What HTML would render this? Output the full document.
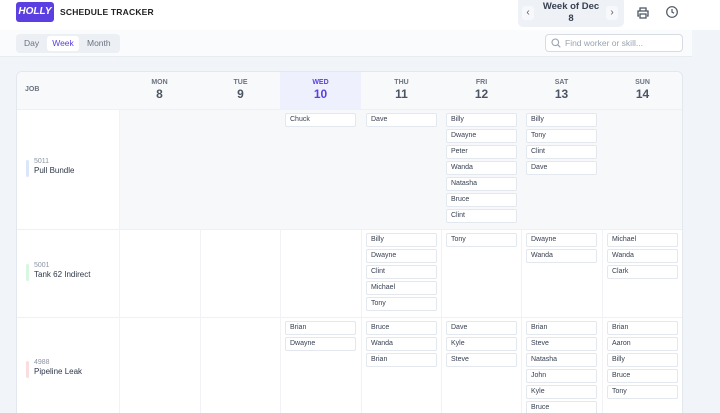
<!DOCTYPE html><html style="height:413px;overflow:hidden"><head><meta charset="utf-8"><style>
*{box-sizing:border-box;margin:0;padding:0}
html,body{width:720px;height:413px;overflow:hidden}
body{background:#f1f4f8;font-family:"Liberation Sans",sans-serif;position:relative;color:#374151}
.a{position:absolute}
.top{left:0;top:0;width:720px;height:30px;background:#fff}
.tool{left:0;top:30px;width:692px;height:27px;background:#fafbfc;border-bottom:1px solid #e8ecf1}
.logo{left:16px;top:2px;width:38px;height:20px;background:#5b3fe0;border-radius:3px;color:#fff;font-weight:bold;font-style:italic;font-size:10px;line-height:20px;text-align:center}
.title{left:60px;top:7px;font-size:8.5px;font-weight:bold;color:#222;letter-spacing:.2px}
.week{left:518px;top:0;width:106px;height:27px;background:#eef1f6;border-radius:0 0 5px 5px}
.seg{left:16px;top:34px;width:104px;height:19px;background:#eceff4;border-radius:4px}
.card{left:16px;top:71px;width:667px;height:342px;background:#fff;border:1px solid #e3e7ee;border-bottom:none;border-radius:6px 6px 0 0;overflow:hidden}
.hd{font-size:7px;font-weight:bold;color:#6b7280;text-align:center}
.num{font-size:12px;font-weight:bold;color:#4b5563;text-align:center;margin-top:1px}
.chip{position:absolute;width:71px;height:14px;background:#fff;border:1px solid #e3e7ee;border-radius:2px;font-size:7px;line-height:12px;padding-left:4px;color:#374151}
.vl{position:absolute;width:1px;background:#f0f2f5}
.hl{position:absolute;height:1px;background:#eef0f4;left:0;width:667px}
.job{font-size:7px;color:#8a94a3}
.jn{font-size:8px;color:#2d3748;margin-top:1px}
.bar{position:absolute;width:3px;height:17px;border-radius:2px}
</style></head><body>
<div class="a top"></div>
<div class="a logo">HOLLY</div>
<div class="a title">SCHEDULE TRACKER</div>
<div class="a week"></div>
<div class="a" style="left:522px;top:6px;width:12px;height:14px;background:#f7f8fb;border-radius:3px;font-size:10px;color:#555;text-align:center;line-height:13px">‹</div>
<div class="a" style="left:606px;top:6px;width:12px;height:14px;background:#f7f8fb;border-radius:3px;font-size:10px;color:#555;text-align:center;line-height:13px">›</div>
<div class="a" style="left:536px;top:1px;width:70px;text-align:center;font-size:9.5px;font-weight:bold;color:#374151;line-height:12px">Week of Dec<br>8</div>
<svg class="a" style="left:636px;top:6px" width="14" height="14" viewBox="0 0 14 14" fill="none" stroke="#4b5563" stroke-width="1.3"><path d="M4 5V2h6v3M3 10H2V5h10v5h-1M4 8h6v4H4z"/></svg>
<svg class="a" style="left:665px;top:5px" width="14" height="14" viewBox="0 0 14 14" fill="none" stroke="#4b5563" stroke-width="1.2"><circle cx="7" cy="7" r="5.3"/><path d="M7 4v3l2 1.3"/></svg>
<div class="a tool"></div>
<div class="a seg"></div>
<div class="a" style="left:24px;top:38px;font-size:8.5px;color:#6b7280">Day</div>
<div class="a" style="left:47px;top:36px;width:32px;height:15px;background:#fff;border-radius:3px;font-size:8.5px;color:#5b3fe0;text-align:center;line-height:15px">Week</div>
<div class="a" style="left:87px;top:38px;font-size:8.5px;color:#6b7280">Month</div>
<div class="a" style="left:545px;top:34px;width:138px;height:18px;background:#fff;border:1px solid #d6dbe4;border-radius:4px"></div>
<svg class="a" style="left:551px;top:38px" width="10" height="10" viewBox="0 0 10 10" fill="none" stroke="#9aa3b0" stroke-width="1.1"><circle cx="4.3" cy="4.3" r="3.3"/><path d="M6.8 6.8L9.3 9.3"/></svg>
<div class="a" style="left:565px;top:38px;font-size:8.5px;color:#9aa3b0">Find worker or skill...</div>

<div class="a card">
<div class="a" style="left:0;top:0;width:667px;height:37px;background:#f8f9fb"></div>
<div class="a" style="left:263px;top:0;width:81px;height:37px;background:#eef0fd"></div>
<div class="a" style="left:102px;top:37px;width:565px;height:120px;background:#f7f8fa"></div>
<div class="hl" style="top:37px"></div><div class="hl" style="top:157px"></div><div class="hl" style="top:245px"></div>
<div class="vl" style="left:102px;top:37px;height:305px"></div>
<div class="vl" style="left:183px;top:157px;height:185px"></div>
<div class="vl" style="left:263px;top:157px;height:185px"></div>
<div class="vl" style="left:344px;top:157px;height:185px"></div>
<div class="vl" style="left:424px;top:157px;height:185px"></div>
<div class="vl" style="left:504px;top:157px;height:185px"></div>
<div class="vl" style="left:585px;top:157px;height:185px"></div>
<div class="a hd" style="left:8px;top:14px">JOB</div>
<div class="a" style="left:102px;top:7px;width:81px"><div class="hd">MON</div><div class="num">8</div></div>
<div class="a" style="left:183px;top:7px;width:81px"><div class="hd">TUE</div><div class="num">9</div></div>
<div class="a" style="left:263px;top:7px;width:81px"><div class="hd" style="color:#5b3fe0">WED</div><div class="num" style="color:#5b3fe0">10</div></div>
<div class="a" style="left:344px;top:7px;width:81px"><div class="hd">THU</div><div class="num">11</div></div>
<div class="a" style="left:424px;top:7px;width:81px"><div class="hd">FRI</div><div class="num">12</div></div>
<div class="a" style="left:504px;top:7px;width:81px"><div class="hd">SAT</div><div class="num">13</div></div>
<div class="a" style="left:585px;top:7px;width:81px"><div class="hd">SUN</div><div class="num">14</div></div>

<div class="bar" style="left:9px;top:88px;background:#dbe6fb"></div>
<div class="a" style="left:17px;top:86px"><div class="job">5011</div><div class="jn">Pull Bundle</div></div>
<div class="bar" style="left:9px;top:192px;background:#d9f6e1"></div>
<div class="a" style="left:17px;top:190px"><div class="job">5001</div><div class="jn">Tank 62 Indirect</div></div>
<div class="bar" style="left:9px;top:289px;background:#fbdde0"></div>
<div class="a" style="left:17px;top:287px"><div class="job">4988</div><div class="jn">Pipeline Leak</div></div>

<div class="chip" style="left:268px;top:41px">Chuck</div>
<div class="chip" style="left:349px;top:41px">Dave</div>
<div class="chip" style="left:429px;top:41px">Billy</div>
<div class="chip" style="left:429px;top:57px">Dwayne</div>
<div class="chip" style="left:429px;top:73px">Peter</div>
<div class="chip" style="left:429px;top:89px">Wanda</div>
<div class="chip" style="left:429px;top:105px">Natasha</div>
<div class="chip" style="left:429px;top:121px">Bruce</div>
<div class="chip" style="left:429px;top:137px">Clint</div>
<div class="chip" style="left:509px;top:41px">Billy</div>
<div class="chip" style="left:509px;top:57px">Tony</div>
<div class="chip" style="left:509px;top:73px">Clint</div>
<div class="chip" style="left:509px;top:89px">Dave</div>

<div class="chip" style="left:349px;top:161px">Billy</div>
<div class="chip" style="left:349px;top:177px">Dwayne</div>
<div class="chip" style="left:349px;top:193px">Clint</div>
<div class="chip" style="left:349px;top:209px">Michael</div>
<div class="chip" style="left:349px;top:225px">Tony</div>
<div class="chip" style="left:429px;top:161px">Tony</div>
<div class="chip" style="left:509px;top:161px">Dwayne</div>
<div class="chip" style="left:509px;top:177px">Wanda</div>
<div class="chip" style="left:590px;top:161px">Michael</div>
<div class="chip" style="left:590px;top:177px">Wanda</div>
<div class="chip" style="left:590px;top:193px">Clark</div>

<div class="chip" style="left:268px;top:249px">Brian</div>
<div class="chip" style="left:268px;top:265px">Dwayne</div>
<div class="chip" style="left:349px;top:249px">Bruce</div>
<div class="chip" style="left:349px;top:265px">Wanda</div>
<div class="chip" style="left:349px;top:281px">Brian</div>
<div class="chip" style="left:429px;top:249px">Dave</div>
<div class="chip" style="left:429px;top:265px">Kyle</div>
<div class="chip" style="left:429px;top:281px">Steve</div>
<div class="chip" style="left:509px;top:249px">Brian</div>
<div class="chip" style="left:509px;top:265px">Steve</div>
<div class="chip" style="left:509px;top:281px">Natasha</div>
<div class="chip" style="left:509px;top:297px">John</div>
<div class="chip" style="left:509px;top:313px">Kyle</div>
<div class="chip" style="left:509px;top:329px">Bruce</div>
<div class="chip" style="left:590px;top:249px">Brian</div>
<div class="chip" style="left:590px;top:265px">Aaron</div>
<div class="chip" style="left:590px;top:281px">Billy</div>
<div class="chip" style="left:590px;top:297px">Bruce</div>
<div class="chip" style="left:590px;top:313px">Tony</div>
</div>
</body></html>
